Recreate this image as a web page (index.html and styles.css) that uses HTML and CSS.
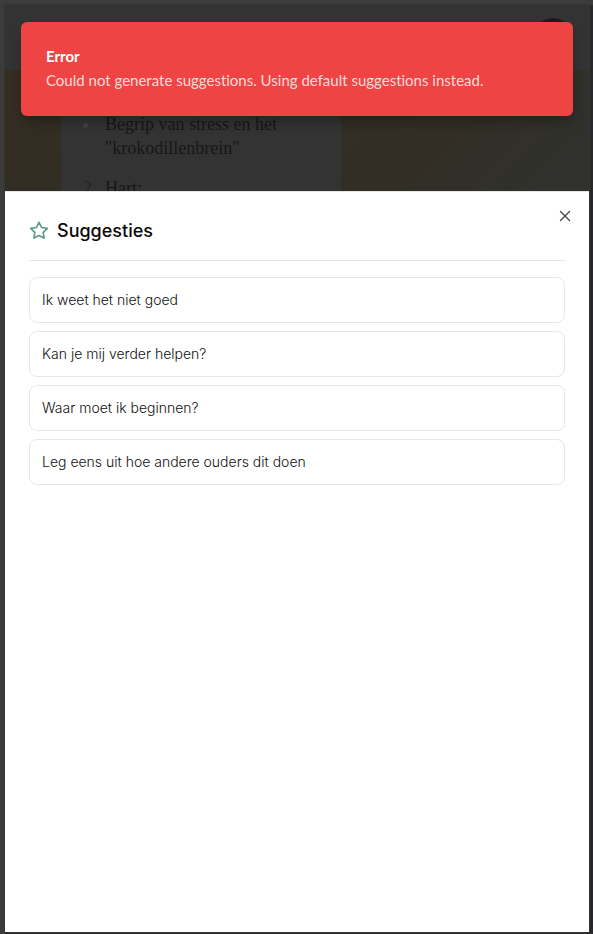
FILE: index.html
```html
<!DOCTYPE html>
<html lang="nl">
<head>
<meta charset="utf-8">
<meta name="viewport" content="width=device-width, initial-scale=1">
<title>Suggesties</title>
<link rel="stylesheet" href="styles.css">
</head>
<body>
<div class="app">
  <header class="topbar"><span class="avatar"></span></header>
  <main class="chat">
    <article class="message">
      <ul class="points"><li>Begrip van stress en het "krokodillenbrein"</li></ul>
      <ol class="steps"><li>Hart:</li></ol>
    </article>
  </main>
  <section class="sheet" role="dialog" aria-labelledby="sheet-title">
    <button class="close" type="button" aria-label="Sluiten">
      <svg width="16" height="16" viewBox="0 0 16 16" fill="none" stroke="currentColor" stroke-width="1.3" stroke-linecap="round"><path d="M3.5 3.5l9 9M12.5 3.5l-9 9"/></svg>
    </button>
    <header class="sheet-header">
      <svg class="star" width="20" height="20" viewBox="0 0 24 24" fill="none" stroke="currentColor" stroke-width="2" stroke-linejoin="round"><path d="M12 1.5l3.09 6.26L22 8.77l-5 4.87 1.18 6.88L12 17.27l-6.18 3.25L7 13.64 2 8.77l6.91-1.01z"/></svg>
      <h2 id="sheet-title">Suggesties</h2>
    </header>
    <div class="options">
      <button class="option" type="button">Ik weet het niet goed</button>
      <button class="option" type="button">Kan je mij verder helpen?</button>
      <button class="option" type="button">Waar moet ik beginnen?</button>
      <button class="option" type="button">Leg eens uit hoe andere ouders dit doen</button>
    </div>
  </section>
  <div class="toast" role="alert">
    <strong>Error</strong>
    <p>Could not generate suggestions. Using default suggestions instead.</p>
  </div>
</div>
</body>
</html>
```
FILE: styles.css
```css
* { box-sizing: border-box; }

body {
  margin: 0;
  height: 100vh;
  padding: 5px 4px 2px 5px;
  background: linear-gradient(90deg, #3b3b3b 50%, #28282a 100%);
  font-family: Inter, "Liberation Sans", sans-serif;
}

h2, p, ul, ol { margin: 0; }

.app {
  position: relative;
  display: flex;
  flex-direction: column;
  height: 100%;
  box-shadow: 0 0 0 1px #353535, 0 3px 0 #272527;
}

body::before {
  content: "";
  position: absolute;
  inset: 0 0 auto;
  height: 5px;
  background: #3c3c3c;
}

.topbar {
  display: flex;
  flex: none;
  justify-content: flex-end;
  height: 65px;
  padding: 13px 16px;
  background: #333;
}

.avatar {
  width: 40px;
  height: 40px;
  border-radius: 50%;
  background: #17201e;
}

.chat {
  flex: 1;
  min-height: 0;
  overflow: hidden;
  padding: 0 248px 0 56px;
  background: linear-gradient(135deg, #332d22 0, #322e26 360px, #30312c 460px, #303030 540px);
}

.message {
  height: 100%;
  padding: 42px 22px;
  background: #333;
  color: #161719;
  font: 18px/24px "Liberation Serif", serif;
}

.points, .steps {
  padding: 0;
  list-style: none;
}

.points { margin-bottom: 16px; }
.steps { counter-reset: step 1; }

.points li, .steps li {
  display: grid;
  grid-template-columns: 22px 1fr;
}

.points li::before {
  content: "";
  width: 5px;
  height: 5px;
  margin: 11px 0 0;
  border-radius: 50%;
  background: #424242;
}

.steps li::before {
  counter-increment: step;
  content: counter(step) ".";
  color: #222325;
}

.sheet {
  position: absolute;
  inset: auto 0 0;
  height: calc(80% - 1px);
  padding: 24px;
  border-top: 1px solid #e5e5e5;
  background: #fff;
  color: #0a0a0a;
}

.close {
  position: absolute;
  top: 16px;
  right: 16px;
  width: 16px;
  height: 16px;
  padding: 0;
  border: 0;
  background: none;
  color: #444;
}

.close svg { display: block; }

.sheet-header {
  display: flex;
  align-items: center;
  gap: 8px;
  margin-bottom: 16px;
  padding-bottom: 14px;
  border-bottom: 1px solid #e5e5e5;
}

.sheet-header h2 {
  font-size: 18px;
  font-weight: 500;
  line-height: 30px;
}

.star { color: #5d9c83; }

.options {
  display: flex;
  flex-direction: column;
  gap: 8px;
}

.option {
  height: 46px;
  padding: 0 12px;
  border: 1px solid #e5e7eb;
  border-radius: 8px;
  background: #fff;
  color: #111;
  font: 300 14px/20px Inter, "Liberation Sans", sans-serif;
  text-align: left;
}

.toast {
  position: absolute;
  inset: 17px 16px auto;
  padding: 24px 25px 26px;
  border-radius: 6px;
  background: #ef4444;
  box-shadow: 0 8px 14px -3px rgb(0 0 0 / 30%);
  color: #fff;
  font: 15px/20px Lato, "Liberation Sans", sans-serif;
  font-variant-ligatures: none;
}

.toast strong {
  display: block;
  margin-bottom: 4px;
  font-weight: 700;
}

.toast p { color: #fcdada; }
```
